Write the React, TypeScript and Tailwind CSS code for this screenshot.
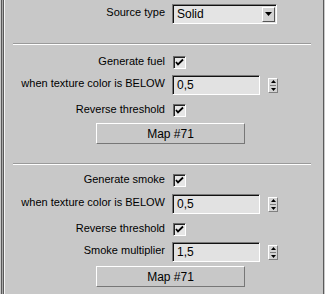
const font = { fontFamily: '"Liberation Sans", Arial, sans-serif' };

function Label({ text }: { text: string }) {
  return <div className="w-[165px] shrink-0 text-right text-[11px] leading-[13px] mb-[3px] text-black">{text}</div>;
}

function Check() {
  return (
    <div className="ml-[8px] w-[13px] h-[13px] bg-[#e6e6e6] border-t border-l border-t-[#6a6a6a] border-l-[#6a6a6a] border-b border-r border-b-white border-r-white shadow-[inset_1px_1px_0_#222] flex items-center justify-center">
      <svg width="9" height="9" viewBox="0 0 9 9">
        <path d="M1 4 L3 6.5 L8 1.5" fill="none" stroke="#000" strokeWidth="1.8" />
      </svg>
    </div>
  );
}

function Spinner() {
  return (
    <div className="ml-[8px] w-[10px] h-[15px] bg-[#d4d4d4] border border-t-white border-l-white border-b-[#808080] border-r-[#808080] flex flex-col items-center justify-center gap-[2px]">
      <svg width="5" height="3" viewBox="0 0 5 3"><path d="M0 3 L2.5 0 L5 3Z" fill="#000" /></svg>
      <div className="w-[6px] h-px bg-[#808080]" />
      <svg width="5" height="3" viewBox="0 0 5 3"><path d="M0 0 L2.5 3 L5 0Z" fill="#000" /></svg>
    </div>
  );
}

function Field({ value }: { value: string }) {
  return (
    <div className="flex items-center ml-[7px]">
      <div className="w-[88px] h-[20px] bg-[#e2e2e2] border border-t-[#7a7a7a] border-l-[#7a7a7a] border-b-white border-r-white shadow-[inset_1px_1px_0_#111] pl-[4px] text-[12px] leading-[18px] text-black">
        {value}
      </div>
      <Spinner />
    </div>
  );
}

function Button() {
  return (
    <div className="ml-[96px] w-[149px] h-[21px] bg-[#c8c8c8] border border-t-white border-l-white border-b-[#777] border-r-[#777] flex items-center justify-center text-[12px] text-black">
      Map #71
    </div>
  );
}

function Sep() {
  return (
    <div className="mx-[13px] w-[298px]">
      <div className="h-px bg-[#9a9a9a]" />
      <div className="h-px bg-white" />
    </div>
  );
}

export default function App() {
  return (
    <div
      style={font}
      className="w-[325px] h-[294px] bg-[#c8c8c8] flex flex-col shadow-[inset_1px_0_0_#c8c8c8,inset_2px_0_0_#5a5a5a,inset_3px_0_0_#a8a8a8,inset_4px_0_0_#5a5a5a,inset_5px_0_0_#f4f4f4,inset_-1px_0_0_#c8c8c8,inset_-2px_0_0_#5a5a5a]"
    >
      <div className="flex items-center mt-[4px] h-[20px]">
        <Label text="Source type" />
        <div className="ml-[7px] w-[105px] h-[20px] bg-[#e4e4e4] border border-t-[#7a7a7a] border-l-[#7a7a7a] border-b-white border-r-white shadow-[inset_1px_1px_0_#111] flex items-center justify-between pl-[4px] pr-[1px]">
          <span className="text-[12px] text-black">Solid</span>
          <div className="w-[13px] h-[15px] bg-[#d4d4d4] border border-t-white border-l-white border-b-[#555] border-r-[#555] flex items-center justify-center">
            <svg width="7" height="4" viewBox="0 0 7 4"><path d="M0 0 L3.5 4 L7 0Z" fill="#000" /></svg>
          </div>
        </div>
      </div>
      <div className="mt-[19px]"><Sep /></div>

      <div className="flex items-center mt-[11px] h-[13px]">
        <Label text="Generate fuel" />
        <Check />
      </div>
      <div className="flex items-center mt-[6px] h-[20px]">
        <Label text="when texture color is BELOW" />
        <Field value="0,5" />
      </div>
      <div className="flex items-center mt-[9px] h-[13px]">
        <Label text="Reverse threshold" />
        <Check />
      </div>
      <div className="mt-[6px]"><Button /></div>
      <div className="mt-[19px]"><Sep /></div>

      <div className="flex items-center mt-[9px] h-[13px]">
        <Label text="Generate smoke" />
        <Check />
      </div>
      <div className="flex items-center mt-[7px] h-[20px]">
        <Label text="when texture color is BELOW" />
        <Field value="0,5" />
      </div>
      <div className="flex items-center mt-[9px] h-[13px]">
        <Label text="Reverse threshold" />
        <Check />
      </div>
      <div className="flex items-center mt-[6px] h-[20px]">
        <Label text="Smoke multiplier" />
        <Field value="1,5" />
      </div>
      <div className="mt-[4px]"><Button /></div>
    </div>
  );
}
